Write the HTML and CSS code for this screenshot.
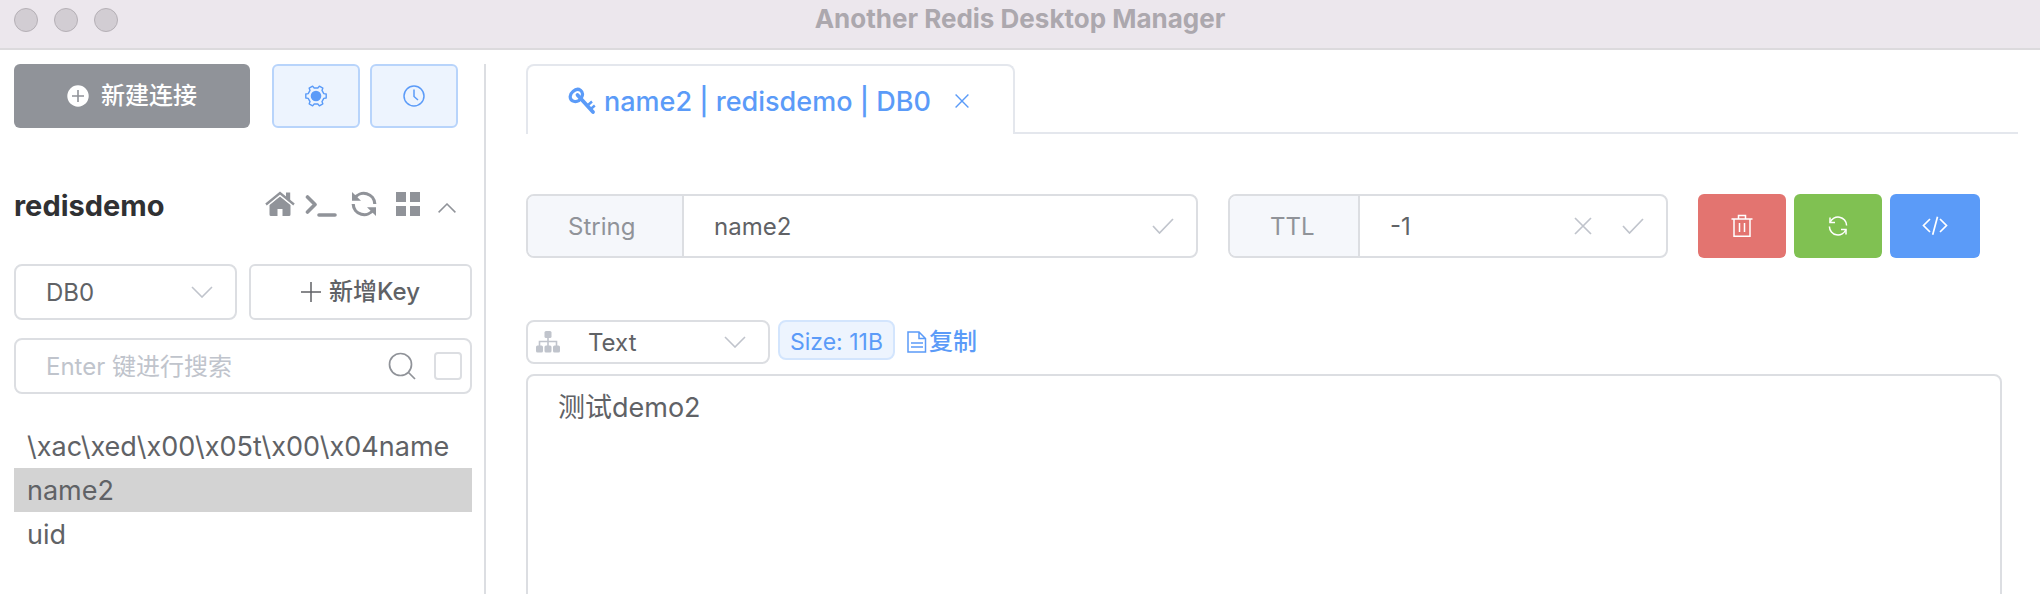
FILE: index.html
```html
<!DOCTYPE html>
<html lang="zh-CN">
<head>
<meta charset="utf-8">
<title>Another Redis Desktop Manager</title>
<link rel="stylesheet" href="styles.css">
</head>
<body>
<div class="app">
  <header class="titlebar">
    <div class="lights"><span class="light"></span><span class="light"></span><span class="light"></span></div>
    <h1 class="title">Another Redis Desktop Manager</h1>
  </header>
  <div class="body">
    <aside class="sidebar">
      <div class="top-actions">
        <button class="btn btn-new" type="button">
          <svg class="ic22" viewBox="0 0 22 22"><circle cx="11" cy="11" r="10.7" fill="#fff"/><path d="M11 5v12M5 11h12" stroke="#909399" stroke-width="1.6"/></svg>
          <span>新建连接</span>
        </button>
        <button class="btn btn-plain" type="button" aria-label="设置">
          <svg class="ic22" viewBox="0 0 22 22" fill="none" stroke="#5b9bf8" stroke-width="1.4" stroke-linejoin="round"><circle cx="11" cy="11" r="5.3" fill="#5b9bf8" stroke="none"/><path d="M18.800 8.600L21.200 9v4l-2.400.4L16.980 16.550l.85 2.280-3.460 2L12.820 18.950H9.180L7.630 20.830l-3.460-2 .85-2.280L3.200 13.400.8 13V9l2.400-.4L5.020 5.450 4.170 3.170l3.460-2L9.180 3.050h3.640l1.550-1.880 3.460 2-.85 2.280z"/></svg>
        </button>
        <button class="btn btn-plain" type="button" aria-label="日志">
          <svg class="ic22" viewBox="0 0 22 22" fill="none" stroke="#5b9bf8" stroke-width="1.5"><circle cx="11" cy="11" r="10"/><path d="M11 4.500v7l4 3.500"/></svg>
        </button>
      </div>
      <div class="conn">
        <h2 class="conn-name">redisdemo</h2>
        <div class="conn-icons">
          <button class="icon-btn home" type="button" aria-label="首页"><svg width="30" height="26" viewBox="0 0 30 26"><path d="M15 5.500L4.500 14v9.500q0 1.500 1.500 1.500h6.500v-7h5v7H24q1.500 0 1.500-1.500V14z" fill="#909399"/><path d="M1 13.500L15 2l14 11.500" fill="none" stroke="#fff" stroke-width="4.600"/><path d="M1 13.500L15 2l14 11.500" fill="none" stroke="#909399" stroke-width="2.300"/><path d="M21 1.500h4.200v8.500L21 6.500z" fill="#909399"/></svg></button>
          <button class="icon-btn term" type="button" aria-label="终端"><svg width="32" height="26" viewBox="0 0 32 26" fill="none" stroke="#909399" stroke-width="3.600" stroke-linecap="round" stroke-linejoin="round"><path d="M2.500 6L10 13.500 2.500 21M14 24h16"/></svg></button>
          <button class="icon-btn" type="button" aria-label="刷新"><svg width="28" height="26" viewBox="0 0 28 26"><g fill="none" stroke="#909399" stroke-width="3.200"><path d="M4.500 7.500A11 11 0 0 1 24.800 13"/><path d="M23.500 18.500A11 11 0 0 1 3.200 13"/></g><path d="M2 1v8.800h9zM26 25v-8.800h-9z" fill="#909399"/></svg></button>
          <button class="icon-btn" type="button" aria-label="菜单"><svg width="26" height="26" viewBox="0 0 26 26" fill="#909399"><path d="M1 1h10v10H1zM15 1h10v10H15zM1 15h10v10H1zM15 15h10v10H15z"/></svg></button>
          <button class="icon-btn caret" type="button" aria-label="折叠"><svg width="18" height="10" viewBox="0 0 18 10" fill="none" stroke="#909399" stroke-width="1.500"><path d="M.6 9.400L9 1l8.400 8.400"/></svg></button>
        </div>
      </div>
      <div class="db-row">
        <label class="select-box">
          <select class="select" aria-label="数据库"><option>DB0</option></select>
          <svg class="chevron" width="22" height="12" viewBox="0 0 22 12" fill="none" stroke="#c0c4cc" stroke-width="1.600"><path d="M1 1l10 10L21 1"/></svg>
        </label>
        <button class="btn btn-add" type="button">
          <svg width="20" height="20" viewBox="0 0 20 20" stroke="#606266" stroke-width="1.500"><path d="M10 0v20M0 10h20"/></svg>
          <span>新增Key</span>
        </button>
      </div>
      <div class="search">
        <input class="search-input" type="text" placeholder="Enter 键进行搜索" aria-label="搜索">
        <svg width="28" height="28" viewBox="0 0 28 28" fill="none" stroke="#909399" stroke-width="1.700"><circle cx="12.500" cy="12.500" r="11"/><path d="M20.500 20.500l6.500 6.500"/></svg>
        <input class="check" type="checkbox" aria-label="精确搜索">
      </div>
      <ul class="keys">
        <li class="key">\xac\xed\x00\x05t\x00\x04name</li>
        <li class="key active">name2</li>
        <li class="key">uid</li>
      </ul>
    </aside>
    <main class="main">
      <div class="tabs">
        <div class="tab">
          <svg width="28" height="28" viewBox="0 0 28 28" fill="none" stroke="#5b9bf8"><path d="M5 4.500Q9 .8 12.500 3.200 16 6 13.500 10.500 11 15 6.500 14.500 2 13.500 2.200 9.500 2.500 6.500 5 4.500z" stroke-width="3.200"/><path d="M9.500 8l15.500 17" stroke-width="3.800" stroke-linecap="round"/><path d="M19.500 18.500l4.500-4M22.800 22l4-3.500" stroke-width="2.400"/></svg>
          <button class="tab-name" type="button">name2 | redisdemo | DB0</button>
          <button class="icon-btn" type="button" aria-label="关闭"><svg width="14" height="14" viewBox="0 0 14 14" stroke="#5b9bf8" stroke-width="1.400"><path d="M.6.6l12.800 12.800M13.400.6L.6 13.400"/></svg></button>
        </div>
      </div>
      <div class="key-row">
        <div class="group group-key">
          <label class="prepend prepend-key" for="key-name">String</label>
          <input class="field" id="key-name" type="text" value="name2">
          <button class="icon-btn" type="button" aria-label="保存"><svg width="22" height="16" viewBox="0 0 22 16" fill="none" stroke="#c0c4cc" stroke-width="1.700"><path d="M1 8l6.500 7L21 1"/></svg></button>
        </div>
        <div class="group group-ttl">
          <label class="prepend prepend-ttl" for="ttl">TTL</label>
          <input class="field" id="ttl" type="text" value="-1">
          <button class="icon-btn" type="button" aria-label="清除"><svg width="18" height="18" viewBox="0 0 18 18" stroke="#c0c4cc" stroke-width="1.700"><path d="M1 1l16 16M17 1L1 17"/></svg></button>
          <button class="icon-btn" type="button" aria-label="保存 TTL"><svg width="22" height="16" viewBox="0 0 22 16" fill="none" stroke="#c0c4cc" stroke-width="1.700"><path d="M1 8l6.500 7L21 1"/></svg></button>
        </div>
        <div class="ops">
          <button class="btn op danger" type="button" aria-label="删除"><svg width="22" height="24" viewBox="0 0 22 24" fill="none" stroke="#fff" stroke-width="1.500"><path d="M.5 5h21M7.500 5V1.500h7V5M3 5v17.200h16V5M8.500 9v9M13.500 9v9"/></svg></button>
          <button class="btn op success" type="button" aria-label="刷新"><svg width="20" height="20" viewBox="0 0 20 20" fill="none" stroke="#fff" stroke-width="1.500"><path d="M2 6.500A8.600 8.600 0 0 1 18.600 9.500M18 13.500A8.600 8.600 0 0 1 1.400 10.500"/><path d="M2 1.500v5h5M18 18.500v-5h-5"/></svg></button>
          <button class="btn op primary" type="button" aria-label="命令"><svg width="26" height="20" viewBox="0 0 26 20" fill="none" stroke="#fff" stroke-width="1.700"><path d="M8 3L1.500 9.500 8 16M18 3l6.500 6.500L18 16M15.500.8l-4.800 18"/></svg></button>
        </div>
      </div>
      <div class="format-row">
        <label class="select-box format">
          <svg class="lead" width="24" height="22" viewBox="0 0 24 22" fill="#c0c4cc"><rect x="8.500" y="0" width="7" height="7" rx="1.500"/><rect x="0" y="14.500" width="7" height="7" rx="1.500"/><rect x="8.500" y="14.500" width="7" height="7" rx="1.500"/><rect x="17" y="14.500" width="7" height="7" rx="1.500"/><path d="M12 6v9M3.500 15v-4.500h17V15" fill="none" stroke="#c0c4cc" stroke-width="1.600"/></svg>
          <select class="select" aria-label="格式"><option>Text</option></select>
          <svg class="chevron" width="22" height="12" viewBox="0 0 22 12" fill="none" stroke="#c0c4cc" stroke-width="1.600"><path d="M1 1l10 10L21 1"/></svg>
        </label>
        <span class="tag">Size: 11B</span>
        <button class="copy" type="button">
          <svg width="20" height="22" viewBox="0 0 20 22" fill="none" stroke="#5b9bf8" stroke-width="1.500"><path d="M1 1h11l6.500 6.500V21H1zM12 1v6.500h6.500M4 12h12M4 16h12"/></svg>
          <span>复制</span>
        </button>
      </div>
      <textarea class="value" aria-label="值">测试demo2</textarea>
    </main>
  </div>
</div>
</body>
</html>
```

FILE: styles.css
```css
* { box-sizing: border-box; }
body { margin: 0; background: #fff; color: #606266; font-family: Inter, "Noto Sans CJK SC", sans-serif; font-size: 24px; }
button, input, select, textarea { font: inherit; color: inherit; margin: 0; }
button { cursor: pointer; }
svg { display: block; flex: none; }
.app { display: flex; flex-direction: column; height: 100vh; overflow: hidden; }

.titlebar { display: grid; flex: none; grid-template-columns: 1fr auto 1fr; height: 50px; padding: 0 14px; border-bottom: 2px solid #dcdadd; background: #ece7ed; }
.lights { display: flex; gap: 16px; padding-top: 8px; }
.light { width: 24px; height: 24px; border: 1px solid #b5b0b6; border-radius: 50%; background: #d2cdd3; }
.title { margin: 0; color: #aca8ae; font-size: 26px; line-height: 38px; font-weight: 700; }

.body { display: flex; flex: 1; min-height: 0; padding-top: 14px; }
.sidebar { flex: none; width: 486px; padding: 0 12px 0 14px; border-right: 2px solid #dcdee2; }
.icon-btn { display: flex; padding: 0; border: 0; background: none; }
.btn { display: flex; align-items: center; justify-content: center; padding: 0; border: 0; border-radius: 6px; font-weight: 500; }
.btn span, .copy span { line-height: 32px; height: 32px; }
.ic22 { width: 22px; height: 22px; }

.top-actions { display: flex; gap: 10px; padding-right: 14px; }
.top-actions .btn { height: 64px; }
.btn-new { flex: 1; gap: 12px; margin-right: 12px; background: #909399; color: #fff; }
.btn-plain { width: 88px; border: 2px solid #b8d4fb; background: #edf4fe; }

.conn { display: flex; justify-content: space-between; align-items: center; height: 136px; padding-right: 16px; }
.conn-name { margin: 0; padding-top: 20px; color: #303133; font-size: 29px; line-height: 36px; font-weight: 700; }
.conn-icons { display: flex; gap: 17px; align-items: center; padding-top: 16px; }
.home { margin-right: -7px; }
.term { margin-right: -4px; }
.caret { padding-top: 8px; }

.db-row { display: grid; grid-template-columns: 1fr 1fr; gap: 12px; }
.select-box { display: flex; position: relative; height: 56px; border: 2px solid #dcdee2; border-radius: 8px; }
.select { flex: 1; width: 100%; padding: 0 30px; border: 0; background: none; appearance: none; }
.chevron { position: absolute; right: 22px; top: 20px; pointer-events: none; }
.btn-add { gap: 8px; border: 2px solid #dcdee2; background: #fff; }

.search { display: flex; align-items: center; height: 56px; margin-top: 18px; padding: 0 8px 0 30px; border: 2px solid #dcdee2; border-radius: 8px; gap: 18px; }
.search-input { flex: 1; min-width: 0; padding: 0; border: 0; outline: 0; background: none; }
.search-input::placeholder { color: #c0c4cc; opacity: 1; }
.check { width: 28px; height: 28px; border: 2px solid #dcdee2; border-radius: 4px; background: #fff; appearance: none; }

.keys { margin: 30px 0 0; padding: 0; list-style: none; }
.key { height: 44px; padding: 0 13px; font-size: 27px; line-height: 46px; white-space: nowrap; }
.key.active { background: #d3d3d3; }

.main { display: flex; flex: 1; flex-direction: column; min-width: 0; padding: 0 22px 0 40px; }
.tabs { display: flex; flex: none; height: 70px; }
.tabs::after { content: ""; flex: 1; border-bottom: 2px solid #e4e7ed; }
.tab { display: flex; align-items: center; padding: 2px 44px 0 40px; border: 2px solid #e4e7ed; border-bottom: 0; border-radius: 8px 8px 0 0; color: #5b9bf8; }
.tab-name { margin: 0 24px 0 8px; padding: 0; border: 0; background: none; font-size: 27px; font-weight: 500; }

.key-row { display: flex; flex: none; gap: 30px; margin-top: 60px; padding-right: 38px; }
.group { display: flex; align-items: center; height: 64px; border: 2px solid #dcdee2; border-radius: 8px; overflow: hidden; }
.group-key { flex: 1; min-width: 0; padding-right: 22px; }
.group-ttl { width: 440px; padding-right: 22px; gap: 30px; }
.prepend { display: flex; align-items: center; padding: 0 40px; height: 100%; border-right: 2px solid #dcdee2; background: #f5f7fb; color: #909399; }
.prepend-key { width: 156px; }
.prepend-ttl { width: 130px; }
.field { flex: 1; min-width: 0; padding: 0 0 0 30px; border: 0; outline: 0; background: none; }
.group-ttl .field { padding: 0; }
.ops { display: flex; gap: 8px; }
.op { width: 88px; height: 64px; }
.danger { background: #e37470; }
.success { background: #80c152; }
.primary { width: 90px; background: #5b9bf8; }

.format-row { display: flex; flex: none; align-items: flex-start; gap: 8px; margin-top: 62px; }
.format { width: 244px; height: 44px; }
.format .lead { position: absolute; left: 8px; top: 9px; pointer-events: none; }
.format .select { padding-left: 60px; }
.format .chevron { top: 14px; }
.tag { height: 40px; padding: 0 10px; border: 2px solid #d3e5fd; border-radius: 8px; background: #edf4fe; color: #5b9bf8; font-size: 23px; line-height: 40px; }
.copy { display: flex; align-items: center; gap: 2px; height: 44px; margin-left: 4px; padding: 0; border: 0; background: none; color: #5b9bf8; font-weight: 500; }
.value { flex: 1 0 auto; min-height: 240px; margin: 10px 16px 0 0; padding: 12px 30px; border: 2px solid #dcdee2; border-radius: 8px; outline: 0; background: #fff; font-size: 27px; line-height: 40px; resize: none; }
```
